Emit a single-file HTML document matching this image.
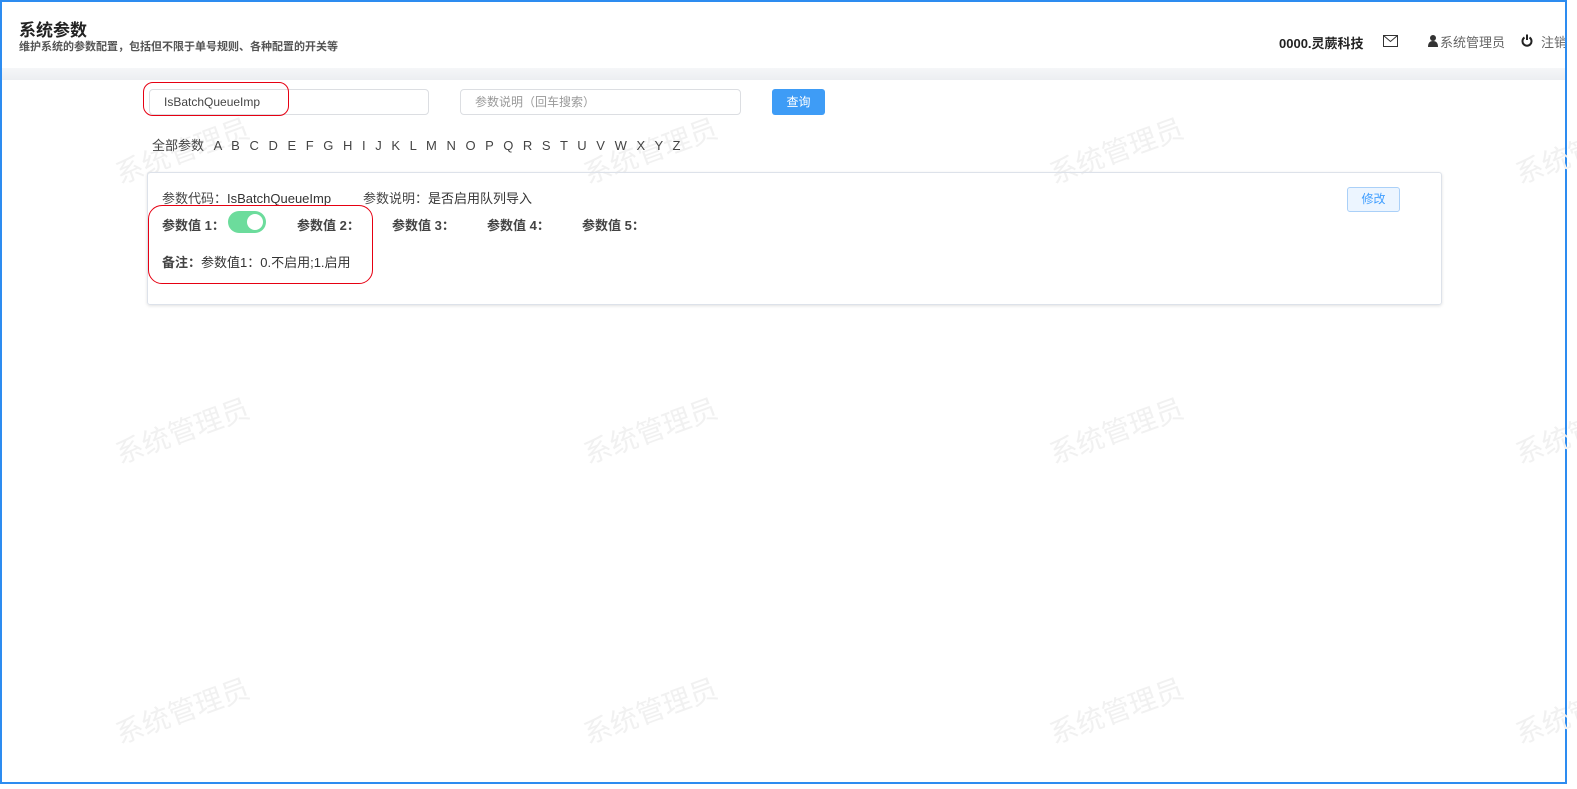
<!DOCTYPE html>
<html><head><meta charset="utf-8"><style>
*{box-sizing:border-box;margin:0;padding:0}
body{width:1577px;height:789px;overflow:hidden;background:#fff;font-family:"Liberation Sans","Noto Sans CJK SC",sans-serif;position:relative;color:#333}
.frame{position:absolute;left:0;top:0;width:1567px;height:784px;border:2px solid #2d8cf0}
.hdr{position:absolute;left:2px;top:2px;width:1563px;height:66px;background:#fff}
.band{position:absolute;left:2px;top:68px;width:1563px;height:12px;background:linear-gradient(#f5f6f8,#eceef1)}
.main{position:absolute;left:8px;top:80px;width:1557px;height:702px;background:#fff}
.abs{position:absolute;white-space:nowrap}
.inp{position:absolute;height:26px;border:1px solid #dcdee2;border-radius:4px;font-size:12px;line-height:24px;padding-left:14px}
.wm{position:absolute;font-size:28px;color:#f1f1f1;transform:rotate(-20deg);white-space:nowrap}
.red{position:absolute;border:1px solid #e60012;border-radius:10px}
.b{font-weight:bold;font-size:13px;color:#444}
</style></head><body>
<div class="frame"></div>
<div class="hdr"></div>
<div class="band"></div>
<div class="main"></div>
<div class="wm" style="left:112px;top:130px">系统管理员</div>
<div class="wm" style="left:580px;top:130px">系统管理员</div>
<div class="wm" style="left:1046px;top:130px">系统管理员</div>
<div class="wm" style="left:1512px;top:130px">系统管理员</div>
<div class="wm" style="left:112px;top:410px">系统管理员</div>
<div class="wm" style="left:580px;top:410px">系统管理员</div>
<div class="wm" style="left:1046px;top:410px">系统管理员</div>
<div class="wm" style="left:1512px;top:410px">系统管理员</div>
<div class="wm" style="left:112px;top:690px">系统管理员</div>
<div class="wm" style="left:580px;top:690px">系统管理员</div>
<div class="wm" style="left:1046px;top:690px">系统管理员</div>
<div class="wm" style="left:1512px;top:690px">系统管理员</div>
<div class="abs" style="left:19px;top:16px;font-size:17px;font-weight:bold;color:#222">系统参数</div>
<div class="abs" style="left:19px;top:38px;font-size:11px;font-weight:bold;color:#555">维护系统的参数配置，包括但不限于单号规则、各种配置的开关等</div>
<div class="abs" style="left:1279px;top:33px;font-size:13px;font-weight:bold;color:#222">0000.灵蕨科技</div>
<svg class="abs" style="left:1383px;top:35px" width="15" height="12" viewBox="0 0 15 12"><rect x="0.5" y="0.5" width="14" height="11" fill="none" stroke="#333"/><path d="M0.5 0.5L7.5 6.5L14.5 0.5" fill="none" stroke="#333"/></svg>
<svg class="abs" style="left:1428px;top:35px" width="10" height="12" viewBox="0 0 10 12"><circle cx="5" cy="3" r="3" fill="#333"/><path d="M0 12Q0 6 5 6Q10 6 10 12Z" fill="#333"/></svg>
<div class="abs" style="left:1440px;top:32px;font-size:13px;color:#666">系统管理员</div>
<svg class="abs" style="left:1521px;top:34px" width="12" height="13" viewBox="0 0 12 13"><path d="M3.5 3.5A4.5 4.5 0 1 0 8.5 3.5" fill="none" stroke="#222" stroke-width="2"/><path d="M6 0.5V6" stroke="#222" stroke-width="2"/></svg>
<div class="abs" style="left:1541px;top:32px;font-size:13px;color:#666;width:24px;overflow:hidden">注销</div>
<div class="inp" style="left:149px;top:89px;width:280px;color:#444">IsBatchQueueImp</div>
<div class="red" style="left:143px;top:82px;width:146px;height:34px"></div>
<div class="inp" style="left:460px;top:89px;width:281px;color:#999">参数说明（回车搜索）</div>
<div class="abs" style="left:772px;top:89px;width:53px;height:26px;background:#3e9cf6;border-radius:3px;color:#fff;font-size:12px;line-height:26px;text-align:center">查询</div>
<div class="abs" style="left:152px;top:135px;font-size:13px;color:#444;word-spacing:6px">全部参数 A B C D E F G H I J K L M N O P Q R S T U V W X Y Z</div>
<div class="abs" style="left:147px;top:172px;width:1295px;height:133px;border:1px solid #dde2ea;border-radius:3px;box-shadow:0 1px 3px rgba(0,0,0,.12)"></div>
<div class="abs" style="left:162px;top:188px;font-size:13px;color:#333"><span style="color:#444">参数代码：</span>IsBatchQueueImp</div>
<div class="abs" style="left:363px;top:188px;font-size:13px;color:#333"><span style="color:#444">参数说明：</span>是否启用队列导入</div>
<div class="abs" style="left:1347px;top:187px;width:53px;height:25px;border:1px solid #aad0f8;background:#ecf5ff;border-radius:3px;color:#409eff;font-size:12px;line-height:23px;text-align:center">修改</div>
<div class="abs b" style="left:162px;top:215px">参数值 1：</div>
<div class="abs" style="left:228px;top:211px;width:38px;height:22px;border-radius:11px;background:#6cdc9c"><div style="position:absolute;right:3px;top:3px;width:16px;height:16px;border-radius:50%;background:#fff"></div></div>
<div class="abs b" style="left:297px;top:215px">参数值 2：</div>
<div class="abs b" style="left:392px;top:215px">参数值 3：</div>
<div class="abs b" style="left:487px;top:215px">参数值 4：</div>
<div class="abs b" style="left:582px;top:215px">参数值 5：</div>
<div class="abs" style="left:162px;top:252px;font-size:13px;color:#333"><b style="color:#444">备注：</b>参数值1：0.不启用;1.启用</div>
<div class="red" style="left:148px;top:205px;width:225px;height:79px;border-radius:14px"></div>
</body></html>
